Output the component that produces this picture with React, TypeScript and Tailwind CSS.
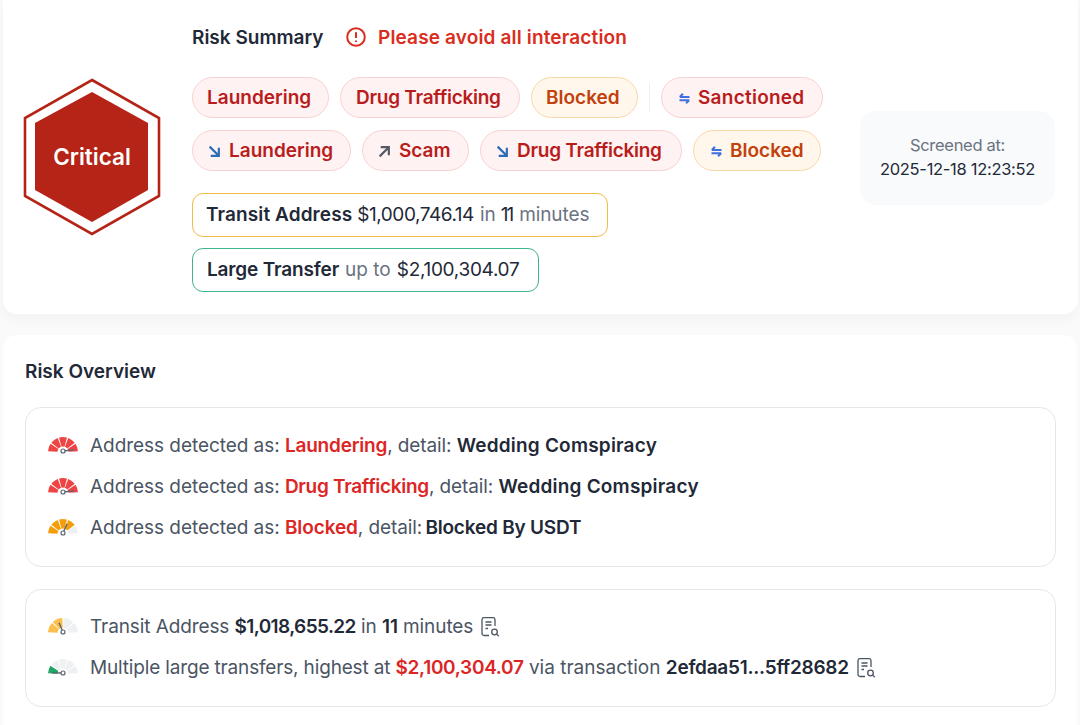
import React from "react";

function Hexagon() {
  return (
    <svg width="138" height="158" viewBox="0 0 138 158" className="shrink-0">
      <polygon points="69,2 136,40 136,118 69,156 2,118 2,40" fill="#fff" stroke="#b52417" strokeWidth="2.6" strokeLinejoin="miter" />
      <polygon points="69,14 125,45 125,112 69,144 12,112 12,45" fill="#b52417" />
    </svg>
  );
}

function ArrowDR() {
  return (
    <svg width="13" height="13" viewBox="0 0 12 12" fill="none" stroke="#2b6cb8" strokeWidth="2" className="shrink-0">
      <path d="M1.5 1.5 L10 10 M10 2.5 V10 H2.5" />
    </svg>
  );
}
function ArrowUR() {
  return (
    <svg width="13" height="13" viewBox="0 0 12 12" fill="none" stroke="#555a64" strokeWidth="2" className="shrink-0">
      <path d="M1.5 10.5 L10 2 M2.5 2 H10 V9.5" />
    </svg>
  );
}
function Swap() {
  return (
    <svg width="11" height="11" viewBox="0 0 11 11" fill="none" stroke="#3f6fe0" strokeWidth="2" className="shrink-0">
      <path d="M0.8 4 H10.5 M0.8 4 L4 0.8 M10.2 7.2 H0.5 M10.2 7.2 L7 10.2" />
    </svg>
  );
}

function Tag({ children, icon, orange, box }: { children: React.ReactNode; icon?: React.ReactNode; orange?: boolean; box: string }) {
  return (
    <span
      className={
        "flex h-[41px] items-center gap-[8px] rounded-full border pt-[1px] text-[19px] font-semibold whitespace-nowrap " +
        (orange
          ? "border-[#fad7a8] bg-[#fff7ec] text-[#c2410c] "
          : "border-[#fad1d1] bg-[#fef2f2] text-[#b91c1c] ") +
        box
      }
    >
      {icon}
      {children}
    </span>
  );
}

function Gauge({ colors, needle }: { colors: string[]; needle: number }) {
  const cx = 15, cy = 15;
  const R = 15, r = 5.5;
  const pt = (rad: number, a: number) => [cx - rad * Math.cos(a), cy - rad * Math.sin(a)];
  const n = colors.length;
  const gap = 0.09;
  const segs = colors.map((c, i) => {
    const a0 = (i / n) * Math.PI + gap / 2;
    const a1 = ((i + 1) / n) * Math.PI - gap / 2;
    const [x0, y0] = pt(R, a0);
    const [x1, y1] = pt(R, a1);
    const [x2, y2] = pt(r, a1);
    const [x3, y3] = pt(r, a0);
    return (
      <path
        key={i}
        d={`M${x0} ${y0} A${R} ${R} 0 0 1 ${x1} ${y1} L${x2} ${y2} A${r} ${r} 0 0 0 ${x3} ${y3} Z`}
        fill={c}
      />
    );
  });
  const [nx, ny] = pt(11, needle);
  return (
    <svg width="32" height="18" viewBox="-1 -1 32 18" className="mb-[4px] shrink-0">
      {segs}
      <line x1={cx} y1={cy - 1} x2={nx} y2={ny} stroke="#5b6472" strokeWidth="1.4" />
      <circle cx={cx} cy={cy - 1} r="2" fill="#fff" stroke="#5b6472" strokeWidth="1.2" />
    </svg>
  );
}

function Report() {
  return (
    <svg width="19" height="20" viewBox="0 0 19 20" fill="none" stroke="#4b5563" strokeWidth="1.3" className="mb-[2px] shrink-0">
      <path d="M8 18.5 H3 A2 2 0 0 1 1 16.5 V2.5 A2 2 0 0 1 3 0.7 H12 A2 2 0 0 1 14 2.5 V9" />
      <path d="M4.5 5 H10.5 M4.5 8 H10.5 M4.5 11.5 H7" />
      <circle cx="13.5" cy="15" r="2.8" />
      <path d="M15.6 17.1 L17.8 19.2" />
    </svg>
  );
}

const red = ["#ef4444", "#ef4444", "#ef4444", "#ef4444", "#ef4444"];
const orange = ["#f59e0b", "#f59e0b", "#f59e0b", "#f59e0b", "#edf0f2"];
const yellow = ["#fbbf4d", "#fbbf4d", "#eef1f2", "#eef1f2"];
const green = ["#22a565", "#eef1f2", "#eef1f2", "#eef1f2", "#eef1f2"];

function Row({ gauge, children }: { gauge: React.ReactNode; children: React.ReactNode }) {
  return (
    <div className="flex h-[41px] items-center text-[19px] tracking-[-0.1px] whitespace-nowrap text-[#4b5563]">
      <span className="mr-[11px] flex w-[32px] justify-center">{gauge}</span>
      <span>{children}</span>
    </div>
  );
}

const B = ({ children, t }: { children: React.ReactNode; t?: string }) => <b className={"font-semibold text-[#1f2937] " + (t ?? "")}>{children}</b>;
const D = ({ children, t }: { children: React.ReactNode; t?: string }) => <b className={"font-semibold text-[#dc2626] " + (t ?? "")}>{children}</b>;
const Lead = () => <span className="tracking-[-0.05px]">Address detected as: </span>;

export default function App() {
  return (
    <div className="h-[725px] w-[1080px] overflow-hidden bg-[#fafafb] font-['Inter','Liberation_Sans',sans-serif]">
      <section className="ml-[3px] mr-[2px] flex h-[314px] items-start rounded-b-[14px] bg-white pl-[20px] shadow-[0_4px_16px_rgba(15,23,42,0.04)]">
        <div className="relative mt-[78px] w-[169px] shrink-0">
          <Hexagon />
          <span className="absolute left-0 top-0 flex h-[158px] w-[138px] items-center justify-center text-[22.5px] font-semibold text-white">Critical</span>
        </div>
        <div className="w-[668px] shrink-0 pt-[24px]">
          <div className="flex h-[26px] items-center">
            <span className="w-[154px] pt-[2px] text-[19px] font-semibold text-[#1f2937]">Risk Summary</span>
            <svg width="20" height="20" viewBox="0 0 20 20" fill="none" stroke="#d92d20" strokeWidth="2" className="mr-[12px] shrink-0">
              <circle cx="10" cy="10" r="8.8" />
              <path d="M10 5.2 V11 M10 13.4 V15" />
            </svg>
            <span className="pt-[2px] text-[19px] font-semibold tracking-[0.15px] text-[#d92d20]">Please avoid all interaction</span>
          </div>
          <div className="mt-[27px] flex items-center gap-[11px]">
            <Tag box="w-[137px] pl-[14px]">Laundering</Tag>
            <Tag box="w-[180px] pl-[15px] tracking-[-0.25px]">Drug Trafficking</Tag>
            <Tag orange box="w-[107px] pl-[14px]">Blocked</Tag>
            <span className="h-[29px] w-px bg-[#eceef1]" />
            <Tag box="w-[162px] pl-[17px] tracking-[0.25px]" icon={<Swap />}>Sanctioned</Tag>
          </div>
          <div className="mt-[12px] flex items-center gap-[11px]">
            <Tag box="w-[159px] pl-[15px]" icon={<ArrowDR />}>Laundering</Tag>
            <Tag box="w-[107px] pl-[15px]" icon={<ArrowUR />}>Scam</Tag>
            <Tag box="w-[202px] pl-[15px] tracking-[-0.25px]" icon={<ArrowDR />}>Drug Trafficking</Tag>
            <Tag orange box="w-[128px] pl-[17px]" icon={<Swap />}>Blocked</Tag>
          </div>
          <div className="mt-[22px] flex h-[44px] w-[416px] items-center rounded-[11px] border-[1.5px] border-[#f5b849] pl-[13px] text-[19px] whitespace-nowrap text-[#6b7280]">
            <b className="font-semibold tracking-[0.1px] text-[#1f2937]">Transit Address</b>
            <span className="ml-[5px] tracking-[-0.45px] text-[#1f2937]">$1,000,746.14</span>
            <span className="ml-[6px]">in</span>
            <span className="ml-[5px] tracking-[-2px] text-[#1f2937]">11</span>
            <span className="ml-[7px] tracking-[-0.1px]">minutes</span>
          </div>
          <div className="mt-[11px] flex h-[44px] w-[347px] items-center rounded-[11px] border-[1.5px] border-[#3fb58a] pl-[14px] text-[19px] whitespace-nowrap text-[#6b7280]">
            <b className="font-semibold tracking-[-0.15px] text-[#1f2937]">Large Transfer</b>
            <span className="ml-[6px]">up to</span>
            <span className="ml-[6px] tracking-[-0.3px] text-[#1f2937]">$2,100,304.07</span>
          </div>
        </div>
        <div className="mt-[111px] flex h-[94px] w-[195px] flex-col items-center justify-center rounded-[16px] bg-[#f8fafc] pb-[2px] text-[16.5px] leading-[24px] tracking-[-0.3px]">
          <span className="text-[#6b7280]">Screened at:</span>
          <span className="text-[#1f2937]">2025-12-18 12:23:52</span>
        </div>
      </section>

      <section className="mx-[3px] mt-[21px] h-[400px] rounded-t-[14px] bg-white pl-[22px] pr-[21px] pt-[24px]">
        <h2 className="h-[26px] text-[19px] leading-[26px] font-semibold text-[#1f2937]">Risk Overview</h2>
        <div className="mt-[22px] h-[160px] rounded-[16px] border border-[#e5e7eb] pl-[21px] pt-[18px]">
          <Row gauge={<Gauge colors={red} needle={2.95} />}><Lead /><D t="tracking-[-0.2px]">Laundering</D>, detail: <B t="tracking-[0.2px]">Wedding Comspiracy</B></Row>
          <Row gauge={<Gauge colors={red} needle={2.95} />}><Lead /><D t="tracking-[-0.3px]">Drug Trafficking</D>, detail: <B t="tracking-[0.2px]">Wedding Comspiracy</B></Row>
          <Row gauge={<Gauge colors={orange} needle={1.95} />}><Lead /><D>Blocked</D>, detail: <B t="ml-[-2px] tracking-[-0.2px]">Blocked By USDT</B></Row>
        </div>
        <div className="mt-[22px] h-[118px] rounded-[16px] border border-[#e5e7eb] pl-[21px] pt-[17px]">
          <Row gauge={<Gauge colors={yellow} needle={1.2} />}>
            <span className="inline-flex items-center gap-[8px]"><span>Transit Address <B t="tracking-[-0.6px]">$1,018,655.22</B> in <B>11</B> minutes</span><Report /></span>
          </Row>
          <Row gauge={<Gauge colors={green} needle={0.1} />}>
            <span className="inline-flex items-center gap-[8px]"><span><span className="tracking-[-0.16px]">Multiple large transfers, highest at </span><D t="tracking-[-0.3px]">$2,100,304.07</D><span className="tracking-[0px]"> via transaction </span><B t="tracking-[-0.25px]">2efdaa51...5ff28682</B></span><Report /></span>
          </Row>
        </div>
      </section>
    </div>
  );
}
